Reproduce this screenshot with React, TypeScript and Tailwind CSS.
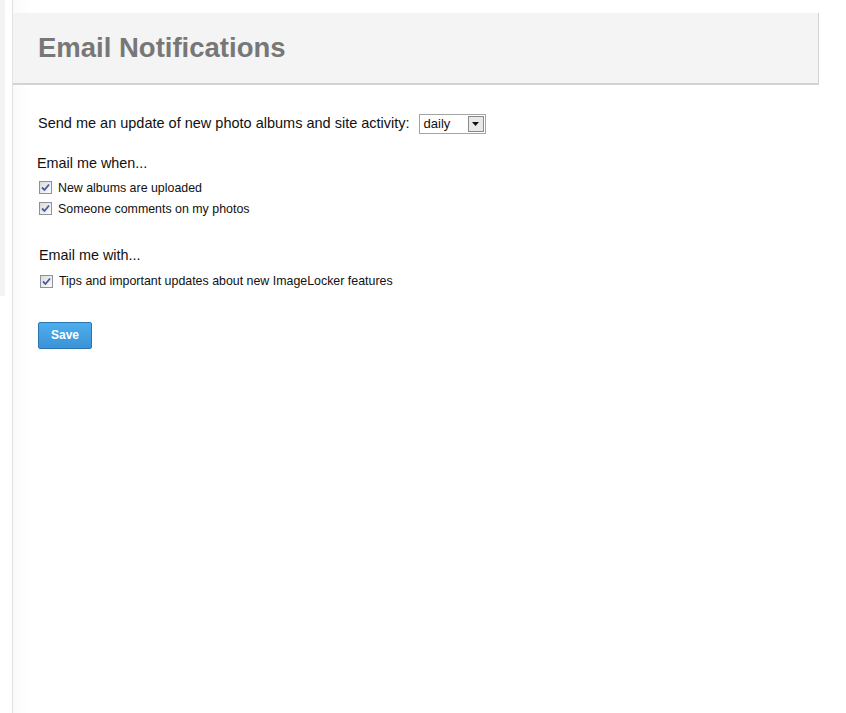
import React from "react";

function Check() {
  return (
    <span className="inline-flex h-[13px] w-[13px] shrink-0 items-center justify-center border border-[#8f8f9d] bg-gradient-to-br from-[#dcdcdc] to-[#fbfbfb]">
      <svg width="9" height="9" viewBox="0 0 9 9">
        <path d="M1 4.5 L3.5 7 L8 1.5" fill="none" stroke="#4a5a9c" strokeWidth="1.8" />
      </svg>
    </span>
  );
}

function Option({ label }: { label: string }) {
  return (
    <label className="flex items-center gap-[6px] text-[12.4px] text-[#111] h-[21px]">
      <Check />
      <span>{label}</span>
    </label>
  );
}

export default function App() {
  return (
    <div
      className="flex min-h-[713px] bg-white"
      style={{ fontFamily: '"Liberation Sans", Arial, sans-serif' }}
    >
      <div className="h-[296px] w-[5px] bg-[#f3f3f3]" />
      <div className="ml-[7px] w-[807px] border-l border-[#e2e2e2] bg-gradient-to-r from-[#fafafa] via-white via-[2%] to-white">
        <div className="mt-[13px] flex h-[72px] items-center border-b-2 border-r border-[#d3d3d3] bg-[#f4f4f4] pl-[25px]">
          <h1 className="text-[27.5px] font-bold text-[#777]">Email Notifications</h1>
        </div>
        <div className="pl-[25px] pt-[28px]">
          <div className="flex items-center gap-[9px] text-[14.5px] text-[#111]">
            <span>Send me an update of new photo albums and site activity:</span>
            <div className="flex h-[20px] w-[67px] items-center justify-between border border-[#a5a5a5] bg-white pl-[4px] text-[13px]">
              <span>daily</span>
              <span className="mr-[1px] flex h-[16px] w-[16px] items-center justify-center border border-[#8a8a8a] bg-[#e8e8e8]">
                <svg width="7" height="4" viewBox="0 0 7 4">
                  <path d="M0 0 H7 L3.5 4 Z" fill="#111" />
                </svg>
              </span>
            </div>
          </div>

          <div className="mt-[18px] -ml-[1px] text-[14.4px] text-[#111]">Email me when...</div>
          <div className="mt-[3px] flex flex-col pl-[1px]">
            <Option label="New albums are uploaded" />
            <Option label="Someone comments on my photos" />
          </div>

          <div className="mt-[26px] pl-[1px] text-[14.4px] text-[#111]">Email me with...</div>
          <div className="mt-[4px] pl-[2px]">
            <Option label="Tips and important updates about new ImageLocker features" />
          </div>

          <button className="mt-[30px] h-[27px] w-[54px] rounded-[2px] border border-[#2b74b0] bg-gradient-to-b from-[#4eaeee] to-[#3a93d6] text-[12px] font-bold text-white">
            Save
          </button>
        </div>
      </div>
    </div>
  );
}
